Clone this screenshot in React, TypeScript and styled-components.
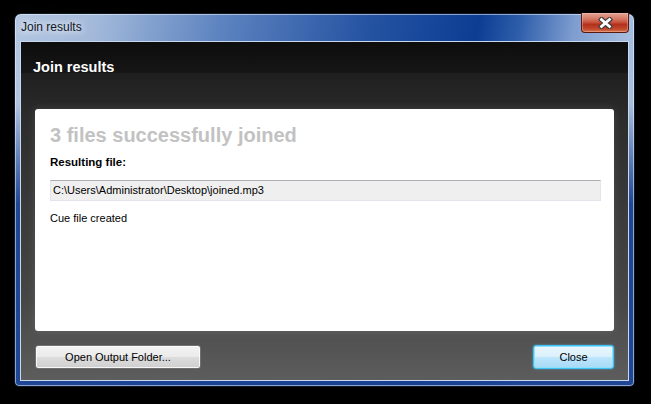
import { styled, createGlobalStyle } from 'styled-components';

const GlobalStyle = createGlobalStyle`
  html, body {
    margin: 0;
    padding: 0;
    background: #000;
  }
  body {
    font-family: "Liberation Sans", Arial, sans-serif;
  }
`;

const CloseGlyph = () => (
  <svg width="15" height="12" viewBox="0 0 15 12">
    <path d="M3.5 2.5 L11.5 9.5 M11.5 2.5 L3.5 9.5" stroke="#3a3a3a" strokeWidth="5" strokeLinecap="square" fill="none" />
    <path d="M3.5 2.5 L11.5 9.5 M11.5 2.5 L3.5 9.5" stroke="#fff" strokeWidth="2.8" strokeLinecap="square" fill="none" />
  </svg>
);

const App = () => {
  return (
    <Screen>
      <GlobalStyle />
      <Window>
        <TitleBar>
          <WindowTitle>Join results</WindowTitle>
          <CloseButton aria-label="Close">
            <CloseGlyph />
          </CloseButton>
        </TitleBar>
        <Client>
          <Header>Join results</Header>
          <Body>
            <Panel>
              <Headline>3 files successfully joined</Headline>
              <Label>Resulting file:</Label>
              <PathBox>C:\Users\Administrator\Desktop\joined.mp3</PathBox>
              <Note>Cue file created</Note>
            </Panel>
            <ButtonRow>
              <Button $width={166}>Open Output Folder...</Button>
              <Button $width={81} $primary>Close</Button>
            </ButtonRow>
          </Body>
        </Client>
      </Window>
    </Screen>
  );
};

export default App;

const Screen = styled.div`
  width: 651px;
  height: 404px;
  box-sizing: border-box;
  padding: 13px 16px 17px 14px;
  background: #000;
  display: flex;
`;

const Window = styled.div`
  width: 621px;
  height: 374px;
  box-sizing: border-box;
  display: flex;
  flex-direction: column;
  padding: 0 5px 5px 5px;
  border: 1px solid #101622;
  border-radius: 7px 7px 5px 5px;
  box-shadow: inset 0 0 0 1px rgba(235, 242, 252, 0.55);
  background:
    linear-gradient(
      to bottom,
      rgba(24, 64, 146, 0) 0px,
      rgba(24, 64, 146, 0) 90px,
      rgba(24, 64, 146, 0.95) 190px,
      rgba(24, 64, 146, 0.95) 100%
    ),
    linear-gradient(
      100deg,
      #b3c7e2 0%,
      #a2b9da 12%,
      #5e84c0 30%,
      #2553a2 52%,
      #0c3d93 68%,
      #2e5eaa 74%,
      #7e9dd0 82%,
      #a4bcde 90%,
      #b0c4e1 100%
    );
`;

const TitleBar = styled.div`
  height: 27px;
  display: flex;
  align-items: flex-start;
  flex-shrink: 0;
`;

const WindowTitle = styled.div`
  padding-left: 1px;
  font-size: 12px;
  line-height: 27px;
  color: #101828;
  text-shadow:
    0 0 6px rgba(255, 255, 255, 0.95),
    0 0 12px rgba(255, 255, 255, 0.8),
    0 0 18px rgba(255, 255, 255, 0.6);
`;

const CloseButton = styled.button`
  margin-left: auto;
  margin-top: -1px;
  width: 48px;
  height: 20px;
  padding: 0;
  display: flex;
  align-items: center;
  justify-content: center;
  border: 1px solid #5a1a12;
  border-top: none;
  border-radius: 0 0 4px 4px;
  background: linear-gradient(
    to bottom,
    #e3a594 0%,
    #d77a66 30%,
    #c8503a 50%,
    #b3301c 60%,
    #c24a2e 85%,
    #d9784e 100%
  );
  box-shadow: inset 0 0 0 1px rgba(255, 210, 200, 0.35);
`;

const Client = styled.div`
  flex: 1;
  display: flex;
  flex-direction: column;
  border: 1px solid #c9d8ec;
  background: linear-gradient(
    to bottom,
    #0d0d0d 0px,
    #161616 31px,
    #1f1f1f 31px,
    #2d2d2d 80px,
    #3c3c3c 180px,
    #474747 260px,
    #5d5d5d 100%
  );
`;

const Header = styled.div`
  height: 31px;
  box-sizing: border-box;
  flex-shrink: 0;
  padding: 19px 0 0 12px;
  font-size: 14.5px;
  font-weight: bold;
  line-height: 12px;
  color: #fff;
`;

const Body = styled.div`
  flex: 1;
  display: flex;
  flex-direction: column;
  padding: 36px 14px 11px 14px;
  gap: 14px;
`;

const Panel = styled.div`
  flex: 1;
  display: flex;
  flex-direction: column;
  align-items: flex-start;
  padding: 14px 13px 0 15px;
  background: #fff;
  border-radius: 3px;
  box-shadow: 0 0 8px rgba(255, 255, 255, 0.12);
`;

const Headline = styled.div`
  font-size: 20px;
  font-weight: bold;
  line-height: 24px;
  color: #c2c2c2;
`;

const Label = styled.div`
  margin-top: 8px;
  font-size: 11.5px;
  font-weight: bold;
  line-height: 14px;
  color: #000;
`;

const PathBox = styled.div`
  margin-top: 11px;
  align-self: stretch;
  height: 21px;
  box-sizing: border-box;
  padding-left: 2px;
  background: #efefef;
  border: 1px solid #e2e6ec;
  border-top-color: #abadb3;
  font-size: 11px;
  line-height: 19px;
  color: #000;
`;

const Note = styled.div`
  margin-top: 10px;
  font-size: 11px;
  line-height: 14px;
  color: #000;
`;

const ButtonRow = styled.div`
  display: flex;
  justify-content: space-between;
  flex-shrink: 0;
`;

const Button = styled.button<{ $width: number; $primary?: boolean }>`
  width: ${(p) => p.$width}px;
  height: 24px;
  padding: 0;
  font-family: "Liberation Sans", Arial, sans-serif;
  font-size: 11px;
  color: #000;
  border-radius: 3px;
  border: 1px solid ${(p) => (p.$primary ? '#3fc3f5' : '#707070')};
  box-shadow: ${(p) =>
    p.$primary
      ? 'inset 0 0 0 1px #8fe0fb, 0 0 2px rgba(80, 200, 255, 0.8)'
      : 'inset 0 0 0 1px rgba(255, 255, 255, 0.8)'};
  background: ${(p) =>
    p.$primary
      ? 'linear-gradient(to bottom, #eaf6fd 0%, #d9f0fc 50%, #bee6fd 50%, #a7d9f5 100%)'
      : 'linear-gradient(to bottom, #f2f2f2 0%, #ebebeb 50%, #dddddd 50%, #cfcfcf 100%)'};
`;
